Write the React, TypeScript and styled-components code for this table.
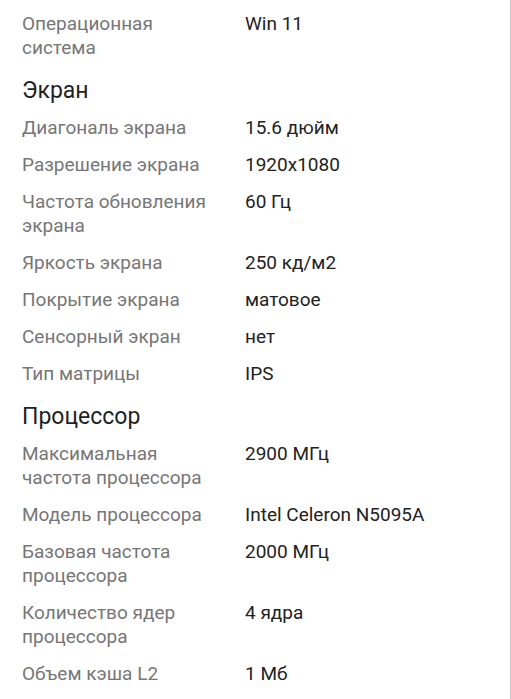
import React from "react";
import styled, { createGlobalStyle } from "styled-components";

const GlobalStyle = createGlobalStyle`
  html, body {
    margin: 0;
    padding: 0;
    background: #ffffff;
  }
  body {
    font-family: Roboto, "Noto Sans", "Liberation Sans", sans-serif;
    -webkit-font-smoothing: antialiased;
  }
`;

const Page = styled.div`
  box-sizing: border-box;
  width: 511px;
  min-height: 699px;
  padding: 6px 0 0 22px;
  border-right: 1px solid #c4c4c4;
  background: #ffffff;
`;

const SectionTitle = styled.h2`
  margin: 0;
  padding: 10px 0 5px;
  font-size: 23px;
  line-height: 28px;
  font-weight: 400;
  color: #1f1f1f;
`;

const Row = styled.div`
  display: grid;
  grid-template-columns: 195px 1fr;
  column-gap: 28px;
  padding: 6px 0 7px;
  font-size: 19px;
  line-height: 24px;
`;

const Label = styled.div`
  color: #767676;
`;

const Value = styled.div`
  color: #222222;
`;

type Item = { kind: "row"; label: string; value: string } | { kind: "title"; text: string };

const items: Item[] = [
  { kind: "row", label: "Операционная система", value: "Win 11" },
  { kind: "title", text: "Экран" },
  { kind: "row", label: "Диагональ экрана", value: "15.6 дюйм" },
  { kind: "row", label: "Разрешение экрана", value: "1920x1080" },
  { kind: "row", label: "Частота обновления экрана", value: "60 Гц" },
  { kind: "row", label: "Яркость экрана", value: "250 кд/м2" },
  { kind: "row", label: "Покрытие экрана", value: "матовое" },
  { kind: "row", label: "Сенсорный экран", value: "нет" },
  { kind: "row", label: "Тип матрицы", value: "IPS" },
  { kind: "title", text: "Процессор" },
  { kind: "row", label: "Максимальная частота процессора", value: "2900 МГц" },
  { kind: "row", label: "Модель процессора", value: "Intel Celeron N5095A" },
  { kind: "row", label: "Базовая частота процессора", value: "2000 МГц" },
  { kind: "row", label: "Количество ядер процессора", value: "4 ядра" },
  { kind: "row", label: "Объем кэша L2", value: "1 Мб" },
];

export default function App() {
  return (
    <>
      <GlobalStyle />
      <Page>
        {items.map((it, i) =>
          it.kind === "title" ? (
            <SectionTitle key={i}>{it.text}</SectionTitle>
          ) : (
            <Row key={i}>
              <Label>{it.label}</Label>
              <Value>{it.value}</Value>
            </Row>
          )
        )}
      </Page>
    </>
  );
}
